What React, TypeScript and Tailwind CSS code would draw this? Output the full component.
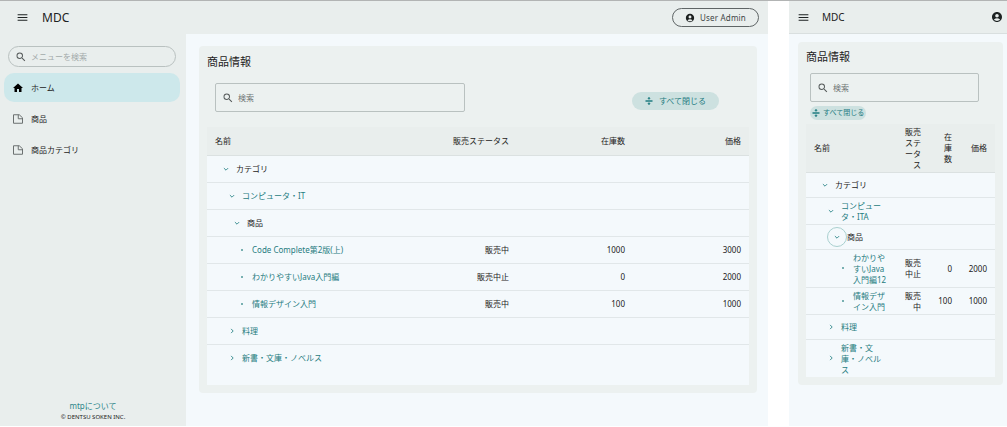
import { MdAccountCircle, MdHome, MdMenu, MdSearch } from 'react-icons/md';

type Row = {
    name: string;
    level: 1 | 2 | 3 | 4;
    icon: 'open' | 'closed' | 'leaf';
    plain?: boolean;
    focused?: boolean;
    status?: string;
    stock?: number;
    price?: number;
};

const desktopRows: Row[] = [
    { name: 'カテゴリ', level: 1, icon: 'open', plain: true },
    { name: 'コンピュータ・IT', level: 2, icon: 'open' },
    { name: '商品', level: 3, icon: 'open', plain: true },
    { name: 'Code Complete第2版(上)', level: 4, icon: 'leaf', status: '販売中', stock: 1000, price: 3000 },
    { name: 'わかりやすいJava入門編', level: 4, icon: 'leaf', status: '販売中止', stock: 0, price: 2000 },
    { name: '情報デザイン入門', level: 4, icon: 'leaf', status: '販売中', stock: 100, price: 1000 },
    { name: '料理', level: 2, icon: 'closed' },
    { name: '新書・文庫・ノベルス', level: 2, icon: 'closed' },
];

const mobileRows: Row[] = [
    { name: 'カテゴリ', level: 1, icon: 'open', plain: true },
    { name: 'コンピュータ・ITA', level: 2, icon: 'open' },
    { name: '商品', level: 3, icon: 'open', plain: true, focused: true },
    { name: 'わかりやすいJava入門編12', level: 4, icon: 'leaf', status: '販売中止', stock: 0, price: 2000 },
    { name: '情報デザイン入門', level: 4, icon: 'leaf', status: '販売中', stock: 100, price: 1000 },
    { name: '料理', level: 2, icon: 'closed' },
    { name: '新書・文庫・ノベルス', level: 2, icon: 'closed' },
];

const desktopIndent = { 1: 'pl-[15px]', 2: 'pl-[21px]', 3: 'pl-[26px]', 4: 'pl-[31px]' };
const mobileIndent = { 1: 'pl-[15px]', 2: 'pl-[21px]', 3: 'pl-[27px]', 4: 'pl-[33px]' };

function PageIcon() {
    return (
        <svg viewBox="0 0 20 20" className="size-[10px]" fill="none" stroke="#6b7070" strokeWidth="2" aria-hidden="true">
            <path d="M1 1.5h11.5l6.5 6v11H1z" />
            <path d="M10.5 1.5v8H19" />
        </svg>
    );
}

function CollapseIcon() {
    return (
        <svg viewBox="0 0 16 16" className="size-2 shrink-0" fill="currentColor" aria-hidden="true">
            <path d="M1 6.6h14v2.8H1zM6.8 0h2.4v2.4h2.3L8 5.6 4.500 2.4h2.3zM6.800 16h2.4v-2.400h2.300L8 10.400l-3.500 3.200h2.300z" />
        </svg>
    );
}

function TreeIcon({ row }: { row: Row }) {
    if (row.icon === 'leaf') {
        return (
            <span className="flex w-2 shrink-0 justify-center" aria-hidden="true">
                <span className="size-[2px] rounded-full bg-[#4f9799]" />
            </span>
        );
    }
    return (
        <button
            type="button"
            aria-label={`${row.name}を${row.icon === 'open' ? '閉じる' : '開く'}`}
            className="relative flex size-2 shrink-0 items-center justify-center text-[#2b8589]"
        >
            {row.focused && <span className="absolute -inset-[6px] rounded-full border border-[#a9d0cf]" />}
            <svg viewBox="0 0 10 10" className="size-[6px]" fill="none" stroke="currentColor" strokeWidth="1.5" aria-hidden="true">
                <path d={row.icon === 'open' ? 'M1.500 3.500L5 7l3.500-3.500' : 'M3.500 1.500L7 5l-3.500 3.500'} />
            </svg>
        </button>
    );
}

function ProductTable({ rows, compact = false }: { rows: Row[]; compact?: boolean }) {
    const indent = compact ? mobileIndent : desktopIndent;
    const cell = compact ? 'h-[25px] px-2 py-[2px]' : 'h-[27px] px-2';
    return (
        <div className={`bg-[#f4f9fc] ${compact ? '' : 'pb-[14px]'}`}>
            <table className="w-full table-fixed text-[8px] leading-[11px]">
                <colgroup>
                    <col />
                    <col className={compact ? 'w-[32px]' : 'w-[21%]'} />
                    <col className={compact ? 'w-[31px]' : 'w-[21.4%]'} />
                    <col className={compact ? 'w-[35px]' : 'w-[21.4%]'} />
                </colgroup>
                <thead className="bg-[#e9eeed]">
                    <tr className={`border-b border-[#dbe1e1] ${compact ? 'h-[48px]' : 'h-[28px]'}`}>
                        <th className="px-2 text-left font-normal">名前</th>
                        <th className="px-2 text-right font-normal">販売ステータス</th>
                        <th className="px-2 text-right font-normal">在庫数</th>
                        <th className="px-2 text-right font-normal">価格</th>
                    </tr>
                </thead>
                <tbody>
                    {rows.map((row) => (
                        <tr key={row.name} className="border-b border-[#e1e7e9] last:border-b-0">
                            <td className={compact ? 'h-[25px] py-[2px] pr-[10px]' : 'h-[27px] pr-2'}>
                                <div className={`flex items-center gap-[6px] ${indent[row.level]}`}>
                                    <TreeIcon row={row} />
                                    {row.plain ? (
                                        <span>{row.name}</span>
                                    ) : (
                                        <a href="#" className="text-[#1f7c80]">{row.name}</a>
                                    )}
                                </div>
                            </td>
                            <td className={`${cell} text-right`}>{row.status}</td>
                            <td className={`${cell} text-right`}>{row.stock}</td>
                            <td className={`${cell} text-right`}>{row.price}</td>
                        </tr>
                    ))}
                </tbody>
            </table>
        </div>
    );
}

function ProductSearch({ id, className }: { id: string; className: string }) {
    return (
        <label htmlFor={id} className={`flex items-center gap-1 rounded-[2px] border border-[#b9c1c0] px-[6px] ${className}`}>
            <MdSearch className="size-3 shrink-0 text-[#565b5b]" aria-hidden="true" />
            <input
                id={id}
                type="text"
                aria-label="検索"
                placeholder="検索"
                className="w-full min-w-0 bg-transparent text-[8px] leading-3 outline-none placeholder:text-[#6f7575]"
            />
        </label>
    );
}

function DesktopView() {
    return (
        <div className="flex min-w-0 flex-1 flex-col bg-[#f4f9fc]">
            <header className="flex h-[33px] items-center bg-[#e9eeed] pr-[9px] pl-4">
                <button type="button" aria-label="メニュー">
                    <MdMenu className="size-[13px]" />
                </button>
                <h1 className="ml-[13px] text-[12px] leading-4">MDC</h1>
                <button type="button" className="ml-auto flex h-[19px] items-center gap-[5px] rounded-full border border-[#5f6566] px-3 text-[8px] tracking-wide text-[#3f4546]">
                    <MdAccountCircle className="size-[10px] text-[#1b1f1f]" aria-hidden="true" />
                    User Admin
                </button>
            </header>

            <div className="flex flex-1">
                {/* サイドメニュー */}
                <aside className="flex w-[186px] shrink-0 flex-col bg-[#e9eeed] pt-3">
                    <label htmlFor="menu-search" className="mr-[10px] ml-2 flex h-[21px] items-center gap-1 rounded-full border border-[#b9c1c0] px-[6px]">
                        <MdSearch className="size-3 shrink-0 text-[#565b5b]" aria-hidden="true" />
                        <input
                            id="menu-search"
                            type="text"
                            aria-label="メニューを検索"
                            placeholder="メニューを検索"
                            className="w-full min-w-0 bg-transparent text-[8px] leading-3 outline-none placeholder:text-[#a3aaaa]"
                        />
                    </label>
                    <nav className="mt-[6px] mr-[6px] ml-1 flex flex-col gap-[2px] text-[8px] leading-3">
                        <a href="#" aria-current="page" className="flex h-[29px] items-center gap-2 rounded-[10px] bg-[#cde8eb] pl-[9px]">
                            <MdHome className="-mx-px size-3 text-black" aria-hidden="true" />
                            ホーム
                        </a>
                        <a href="#" className="flex h-[29px] items-center gap-2 pl-[9px]">
                            <PageIcon />
                            商品
                        </a>
                        <a href="#" className="flex h-[29px] items-center gap-2 pl-[9px]">
                            <PageIcon />
                            商品カテゴリ
                        </a>
                    </nav>
                    <footer className="mt-auto pb-1 text-center">
                        <a href="#" className="block text-[8px] leading-3 text-[#2b8589]">mtpについて</a>
                        <p className="text-[6px] leading-[10px]">© DENTSU SOKEN INC.</p>
                    </footer>
                </aside>

                <main className="min-w-0 flex-1 pt-3 pr-[11px] pb-[33px] pl-[13px]">
                    <section className="rounded-[4px] bg-[#ecf1f0] px-2 pt-2 pb-2">
                        <h2 className="text-[11px] leading-4">商品情報</h2>
                        <div className="mt-[13px] mb-[15px] flex items-center justify-between pr-[30px] pl-2">
                            <ProductSearch id="product-search" className="h-[29px] w-[250px]" />
                            <button type="button" className="mt-[6px] flex h-[18px] items-center gap-[6px] rounded-full bg-[#cde1e0] px-[13px] text-[8px] text-[#1f7c80]">
                                <CollapseIcon />
                                すべて閉じる
                            </button>
                        </div>
                        <ProductTable rows={desktopRows} />
                    </section>
                </main>
            </div>
        </div>
    );
}

function MobileView() {
    return (
        <div className="flex w-[218px] shrink-0 flex-col bg-[#f4f9fc]">
            <header className="flex h-[33px] items-center border-b border-[#d9dfdf] bg-[#e9eeed] pr-1 pl-2">
                <button type="button" aria-label="メニュー">
                    <MdMenu className="size-[13px]" />
                </button>
                <h1 className="ml-3 text-[10px] leading-4">MDC</h1>
                <button type="button" aria-label="アカウント" className="ml-auto">
                    <MdAccountCircle className="size-3" />
                </button>
            </header>
            <main className="pt-2 pr-1 pl-[9px]">
                <section className="rounded-[4px] bg-[#ecf1f0] px-2 pt-[7px] pb-2">
                    <h2 className="text-[11px] leading-4">商品情報</h2>
                    <div className="mt-2 mb-1 flex flex-col items-start gap-1 pr-4 pl-1">
                        <ProductSearch id="product-search-mobile" className="h-[29px] w-full" />
                        <button type="button" className="flex h-[14px] items-center gap-[3px] rounded-full bg-[#cde1e0] px-[2px] text-[7px] text-[#1f7c80]">
                            <CollapseIcon />
                            すべて閉じる
                        </button>
                    </div>
                    <ProductTable rows={mobileRows} compact />
                </section>
            </main>
        </div>
    );
}

export default function App() {
    return (
        <div
            lang="ja"
            className="flex min-h-screen gap-[21px] border-t border-[#b2b4b4] bg-white pb-px font-['Noto_Sans','Noto_Sans_CJK_JP',sans-serif] text-[#1d2222]"
        >
            <DesktopView />
            <MobileView />
        </div>
    );
}
